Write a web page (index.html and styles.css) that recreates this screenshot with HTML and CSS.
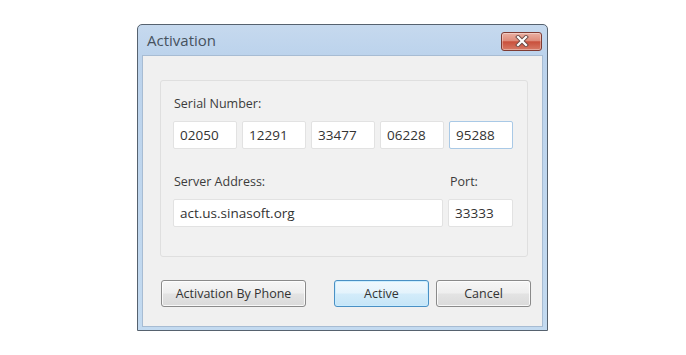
FILE: index.html
```html
<!DOCTYPE html>
<html lang="en">
<head>
    <meta charset="UTF-8">
    <title>Activation</title>
    <link rel="stylesheet" href="styles.css">
</head>
<body>
    <div class="window">
        <div class="titlebar">
            <span class="title">Activation</span>
            <button class="close-button" aria-label="Close">
                <svg width="14" height="12" viewBox="0 0 14 12">
                    <path d="M3 2 L11 10 M11 2 L3 10" stroke="#6b4a46" stroke-width="4" stroke-linecap="square" fill="none"/>
                    <path d="M3 2 L11 10 M11 2 L3 10" stroke="#ffffff" stroke-width="2.2" stroke-linecap="square" fill="none"/>
                </svg>
            </button>
        </div>
        <div class="client">
            <div class="panel">
                <div class="label">Serial Number:</div>
                <div class="serial-row">
                    <input type="text" value="02050">
                    <input type="text" value="12291">
                    <input type="text" value="33477">
                    <input type="text" value="06228">
                    <input type="text" value="95288" class="focused">
                </div>
                <div class="server-row">
                    <div class="label">Server Address:</div>
                    <div class="label port-label">Port:</div>
                    <input type="text" value="act.us.sinasoft.org">
                    <input type="text" value="33333">
                </div>
            </div>
            <div class="button-row">
                <button class="btn phone">Activation By Phone</button>
                <button class="btn default">Active</button>
                <button class="btn">Cancel</button>
            </div>
        </div>
    </div>
</body>
</html>
```

FILE: styles.css
```css
body {
    margin: 0;
    padding-right: 1px;
    height: 100vh;
    display: flex;
    align-items: center;
    justify-content: center;
    background-color: #fff;
    font-family: 'Open Sans', 'Noto Sans', sans-serif;
    color: #3c3c3c;
}
.window {
    width: 411px;
    height: 307px;
    box-sizing: border-box;
    border: 1px solid #56626f;
    border-radius: 5px 5px 0 0;
    background: linear-gradient(#c6d9ee, #bcd3ec 30px, #c3daf0);
    padding: 0 4px 3px;
    display: flex;
    flex-direction: column;
}
.titlebar {
    height: 30px;
    flex: none;
    display: flex;
    align-items: center;
    justify-content: space-between;
    padding-left: 5px;
}
.title {
    font-size: 15px;
    color: #46525e;
}
.close-button {
    width: 41px;
    height: 19px;
    margin: 2px 1px 0 0;
    padding: 0;
    border: 1px solid #7e3b33;
    border-radius: 3px;
    background: linear-gradient(#eab0a3, #de8c7b 45%, #c9503c 52%, #d77a66);
    box-shadow: inset 0 0 0 1px rgba(255, 255, 255, 0.35);
    display: flex;
    align-items: center;
    justify-content: center;
}
.client {
    flex: 1;
    background-color: #f0f0f0;
    border: 1px solid #a7bcd3;
    padding: 24px 11px 0 17px;
    display: flex;
    flex-direction: column;
}
.panel {
    height: 177px;
    box-sizing: border-box;
    margin-right: 3px;
    border: 1px solid #dfdfdf;
    border-radius: 3px;
    background-color: #f1f1f1;
    padding: 15px 14px 0 12px;
}
.label {
    font-size: 12.5px;
    line-height: 16px;
    padding-left: 1px;
    margin-bottom: 9px;
}
.serial-row {
    display: grid;
    grid-template-columns: repeat(5, 1fr);
    gap: 5px;
    margin-bottom: 25px;
}
.server-row {
    display: grid;
    grid-template-columns: 1fr 65px;
    column-gap: 5px;
}
.port-label {
    margin-left: 1px;
}
input {
    height: 28px;
    box-sizing: border-box;
    min-width: 0;
    border: 1px solid #e2e2e2;
    border-radius: 2px;
    background-color: #fff;
    padding: 0 6px;
    font-family: inherit;
    font-size: 13.5px;
    color: #333;
    outline: none;
}
input.focused {
    border-color: #a9c9e6;
}
.button-row {
    display: flex;
    margin: 23px 0 0 1px;
}
.btn {
    width: 95px;
    height: 27px;
    border: 1px solid #8a8a8a;
    border-radius: 3px;
    background: linear-gradient(#f6f6f6, #eeeeee 48%, #e3e3e3 52%, #dadada);
    box-shadow: inset 0 0 0 1px rgba(255, 255, 255, 0.8);
    font-family: inherit;
    font-size: 12.5px;
    color: #333;
    padding: 0;
}
.btn.phone {
    width: 145px;
    margin-right: auto;
}
.btn.default {
    margin-right: 7px;
    border-color: #4a90c4;
    background: linear-gradient(#f0f8fd, #e4f3fc 48%, #d3ecfa 52%, #c6e5f7);
    box-shadow: inset 0 0 0 1px rgba(200, 236, 255, 0.9);
}
```
